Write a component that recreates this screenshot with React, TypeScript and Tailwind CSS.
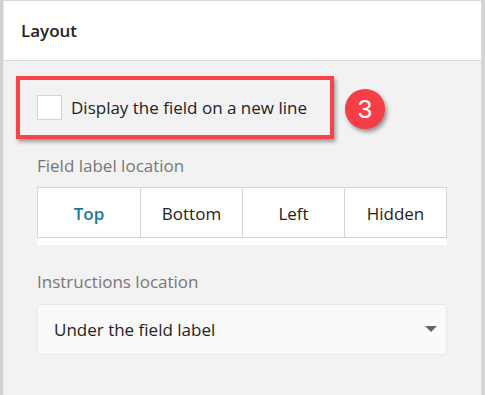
import React from "react";

export default function App() {
  const tabs = ["Top", "Bottom", "Left", "Hidden"];
  return (
    <div
      className="w-[485px] h-[395px] flex bg-[#d4d4d4] overflow-hidden"
      style={{ fontFamily: '"Open Sans", "Noto Sans", sans-serif' }}
    >
      <div className="w-[3px] shrink-0 bg-[#d2d2d2]" />
      <div className="flex-1 flex flex-col border-l border-[#e8e8e8] border-t border-t-[#d8d8d8] mr-[3px] border-r border-r-[#d9d9d9] bg-[#f2f2f2]">
        <div className="h-[60px] shrink-0 bg-white border-b border-[#d9d9d9] flex items-center pl-[17px]">
          <span className="text-[17px] font-semibold text-[#222]">Layout</span>
        </div>
        <div className="pl-[12px] pt-[15px] flex items-center">
          <div className="w-[318px] h-[63px] border-[4px] border-[#f7434a] shadow-[2px_3px_4px_rgba(0,0,0,0.35)] flex items-center pl-[17px]">
            <div className="w-[25px] h-[25px] bg-white border border-[#d4d4d4]" />
            <span className="ml-[9px] text-[17px] text-[#222]">Display the field on a new line</span>
          </div>
          <div className="ml-[11px] mt-[3px] w-[40px] h-[40px] rounded-full bg-[#f33f45] shadow-[2px_3px_4px_rgba(0,0,0,0.4)] flex items-center justify-center">
            <span className="text-white text-[26px] leading-none" style={{ fontFamily: '"Liberation Sans", Arial, sans-serif' }}>3</span>
          </div>
        </div>
        <div className="pl-[33px] w-[443px]">
          <div className="mt-[15px] text-[17px] leading-[23px] text-[#777]">Field label location</div>
          <div className="mt-[10px] bg-white pb-[7px]">
            <div className="h-[51px] grid grid-cols-4 border border-[#d6d6d6]">
              {tabs.map((t, i) => (
                <div
                  key={t}
                  className={
                    "flex items-center justify-center text-[17px] pt-[2px] " +
                    (i > 0 ? "border-l border-[#d6d6d6] " : "") +
                    (i === 0 ? "font-semibold text-[#1b7a98]" : "text-[#222]")
                  }
                >
                  {t}
                </div>
              ))}
            </div>
          </div>
          <div className="mt-[25px] text-[17px] leading-[23px] text-[#777]">Instructions location</div>
          <div className="mt-[11px] h-[51px] bg-[#fafafa] border border-[#e8e8e8] rounded-[3px] flex items-center justify-between pl-[16px] pr-[9px]">
            <span className="text-[17px] text-[#222] pt-[1px]">Under the field label</span>
            <svg width="12" height="7" viewBox="0 0 12 7">
              <path d="M0 0 L12 0 L6 6 Z" fill="#666" />
            </svg>
          </div>
        </div>
      </div>
    </div>
  );
}
